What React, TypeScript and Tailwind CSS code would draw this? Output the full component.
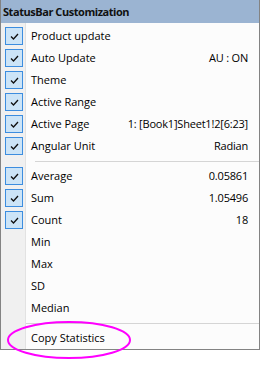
import React from "react"

type Item = { label: string; value?: string; checked?: boolean }

const topItems: Item[] = [
  { label: "Product update", checked: true },
  { label: "Auto Update", value: "AU : ON", checked: true },
  { label: "Theme", checked: true },
  { label: "Active Range", checked: true },
  { label: "Active Page", value: "1: [Book1]Sheet1!2[6:23]", checked: true },
  { label: "Angular Unit", value: "Radian", checked: true },
]

const statItems: Item[] = [
  { label: "Average", value: "0.05861", checked: true },
  { label: "Sum", value: "1.05496", checked: true },
  { label: "Count", value: "18", checked: true },
  { label: "Min" },
  { label: "Max" },
  { label: "SD" },
  { label: "Median" },
]

function Gutter({ children }: { children?: React.ReactNode }) {
  return (
    <div className="w-[25px] shrink-0 self-stretch bg-[#f0f0f0] border-r border-[#e2e2e2] flex items-center pl-[4px]">
      {children}
    </div>
  )
}

function Check() {
  return (
    <div className="w-[18px] h-[18px] border border-[#3c8ddf] bg-[#cce4f7] flex items-center justify-center">
      <svg width="9" height="7" viewBox="0 0 9 7" fill="none">
        <path d="M1 3.5 L3.5 6 L8 1" stroke="#111" strokeWidth="1.3" />
      </svg>
    </div>
  )
}

function Row({ item }: { item: Item }) {
  return (
    <div className="flex h-[22px] items-stretch">
      <Gutter>{item.checked && <Check />}</Gutter>
      <div className="flex-1 flex items-center justify-between pl-[5px] pr-[11px] pb-[2px]">
        <span>{item.label}</span>
        {item.value && <span className="tracking-[-0.2px]">{item.value}</span>}
      </div>
    </div>
  )
}

function Separator({ indent }: { indent: boolean }) {
  return (
    <div className="flex h-[8px]">
      <Gutter />
      <div className={`flex-1 flex items-center ${indent ? "pl-[9px]" : ""}`}>
        <div className="h-px w-full bg-[#d5d5d5]" />
      </div>
    </div>
  )
}

export default function App() {
  return (
    <div className="relative w-[261px] h-[369px] bg-white">
      <div
        className="w-[260px] border-x border-b border-[#838383] bg-[#fcfcfc] text-[11px] leading-none text-black"
        style={{ fontFamily: '"Segoe UI", "Open Sans", "Noto Sans", sans-serif' }}
      >
        {/* Header */}
        <div className="h-[23px] bg-[#9bb4d2] flex items-center pl-[2px] pb-[1px] font-bold tracking-[-0.45px] text-[#111]">
          StatusBar Customization
        </div>
        <div className="flex h-[2px]">
          <Gutter />
        </div>

        {topItems.map((item) => (
          <Row key={item.label} item={item} />
        ))}
        <Separator indent />
        {statItems.map((item) => (
          <Row key={item.label} item={item} />
        ))}
        <Separator indent={false} />
        <Row item={{ label: "Copy Statistics" }} />
      </div>

      {/* highlight */}
      <svg className="absolute left-0 top-0 pointer-events-none" width="261" height="369">
        <ellipse cx="69" cy="340" rx="61" ry="18" fill="none" stroke="#ff00ff" strokeWidth="2" />
      </svg>
    </div>
  )
}
